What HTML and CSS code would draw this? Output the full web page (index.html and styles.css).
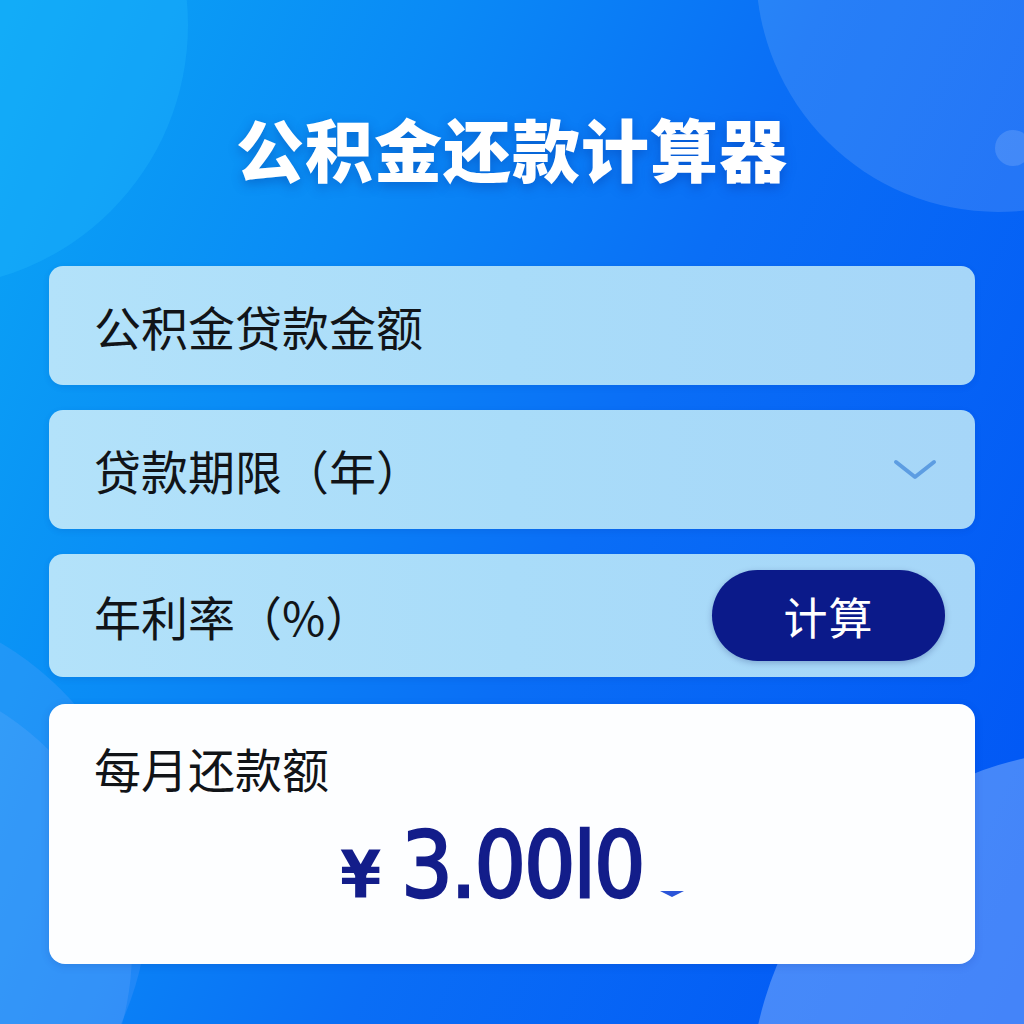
FILE: index.html
```html
<!DOCTYPE html>
<html lang="zh-CN">
<head>
<meta charset="utf-8">
<title>公积金还款计算器</title>
<link rel="stylesheet" href="styles.css">
</head>
<body>
<div class="bg">
  <div class="blob blob-tl"></div>
  <div class="blob blob-tr"></div>
  <div class="blob blob-dot"></div>
  <div class="blob blob-bl1"></div>
  <div class="blob blob-bl2"></div>
  <div class="blob blob-br"></div>
</div>
<main class="page">
  <h1 class="title">公积金还款计算器</h1>
  <div class="form">
    <div class="field">
      <span class="label">公积金贷款金额</span>
    </div>
    <div class="field">
      <span class="label">贷款期限（年）</span>
      <svg class="chevron" width="44" height="24" viewBox="0 0 44 24" aria-hidden="true">
        <path d="M3 4 L22 19 L41 4" fill="none" stroke="#5d9de2" stroke-width="4" stroke-linecap="round" stroke-linejoin="round"/>
      </svg>
    </div>
    <div class="field field-rate">
      <span class="label">年利率（%）</span>
      <button class="calc-btn" type="button">计算</button>
    </div>
    <div class="result">
      <div class="result-label">每月还款额</div>
      <div class="result-value">
        <span class="yen">¥</span>
        <span class="amount">3.00l0</span>
        <span class="caret"></span>
      </div>
    </div>
  </div>
</main>
</body>
</html>
```
FILE: styles.css
```css
html, body {
  margin: 0;
  padding: 0;
}
body {
  width: 1024px;
  height: 1024px;
  overflow: hidden;
  position: relative;
  font-family: "Noto Sans CJK SC", "Noto Sans", sans-serif;
  background: linear-gradient(115deg, #0aa6f5 0%, #0a8af6 30%, #0a6ef6 55%, #0054f5 100%);
}
.bg {
  position: absolute;
  inset: 0;
  overflow: hidden;
  z-index: 0;
}
.blob {
  position: absolute;
  border-radius: 50%;
}
.blob-tl {
  left: -338px;
  top: -238px;
  width: 526px;
  height: 526px;
  background: rgba(40, 190, 255, 0.28);
}
.blob-tr {
  left: 756px;
  top: -272px;
  width: 484px;
  height: 484px;
  background: rgba(255, 255, 255, 0.12);
}
.blob-dot {
  left: 995px;
  top: 130px;
  width: 36px;
  height: 36px;
  background: rgba(255, 255, 255, 0.14);
}
.blob-bl1 {
  left: -448px;
  top: 602px;
  width: 596px;
  height: 596px;
  background: rgba(120, 170, 255, 0.2);
}
.blob-bl2 {
  left: -432px;
  top: 668px;
  width: 564px;
  height: 564px;
  background: rgba(140, 185, 255, 0.18);
}
.blob-br {
  left: 750px;
  top: 750px;
  width: 700px;
  height: 700px;
  background: rgba(150, 190, 255, 0.45);
}
.page {
  position: relative;
  z-index: 1;
  padding: 103px 49px 0;
}
.title {
  margin: 0 0 73px;
  height: 90px;
  line-height: 90px;
  text-align: center;
  color: #ffffff;
  font-size: 68px;
  font-weight: 900;
  letter-spacing: 1px;
  text-shadow: 0 4px 12px rgba(0, 40, 140, 0.35);
}
.form {
  display: flex;
  flex-direction: column;
  gap: 25px;
}
.field {
  height: 119px;
  box-sizing: border-box;
  border-radius: 14px;
  background: linear-gradient(90deg, #b3e2fa 0%, #a9dcf9 50%, #a6d6f8 100%);
  display: flex;
  align-items: center;
  justify-content: space-between;
  padding: 0 38px 0 45px;
  box-shadow: 0 2px 6px rgba(0, 40, 140, 0.12);
}
.field-rate {
  height: 123px;
  padding-right: 30px;
}
.label {
  font-size: 47px;
  color: #111418;
  line-height: 1;
  font-weight: 400;
}
.chevron {
  display: block;
}
.calc-btn {
  width: 233px;
  height: 91px;
  border: none;
  border-radius: 46px;
  background: #0b1a8a;
  color: #ffffff;
  font-family: "Noto Sans CJK SC", "Noto Sans", sans-serif;
  font-size: 44px;
  font-weight: 400;
  letter-spacing: 1px;
  padding: 0;
  box-shadow: 0 2px 6px rgba(0, 20, 90, 0.25);
}
.result {
  margin-top: 2px;
  height: 260px;
  box-sizing: border-box;
  border-radius: 16px;
  background: #fdfeff;
  padding: 36px 45px 0;
  box-shadow: 0 2px 8px rgba(0, 30, 120, 0.15);
}
.result-label {
  font-size: 47px;
  line-height: 56px;
  color: #111418;
}
.result-value {
  margin-top: 30px;
  display: flex;
  align-items: baseline;
  justify-content: flex-start;
  padding-left: 246px;
  color: #131d8a;
  font-family: "DejaVu Sans Condensed", "DejaVu Sans", sans-serif;
}
.yen {
  font-size: 66px;
  line-height: 80px;
  margin-right: 20px;
  font-weight: bold;
}
.amount {
  font-size: 90px;
  line-height: 80px;
  letter-spacing: -2px;
  font-weight: normal;
  -webkit-text-stroke: 2.5px #131d8a;
}
.caret {
  display: inline-block;
  width: 0;
  height: 0;
  margin-left: 16px;
  border-left: 12px solid transparent;
  border-right: 12px solid transparent;
  border-top: 6px solid #2b55d8;
}
```
